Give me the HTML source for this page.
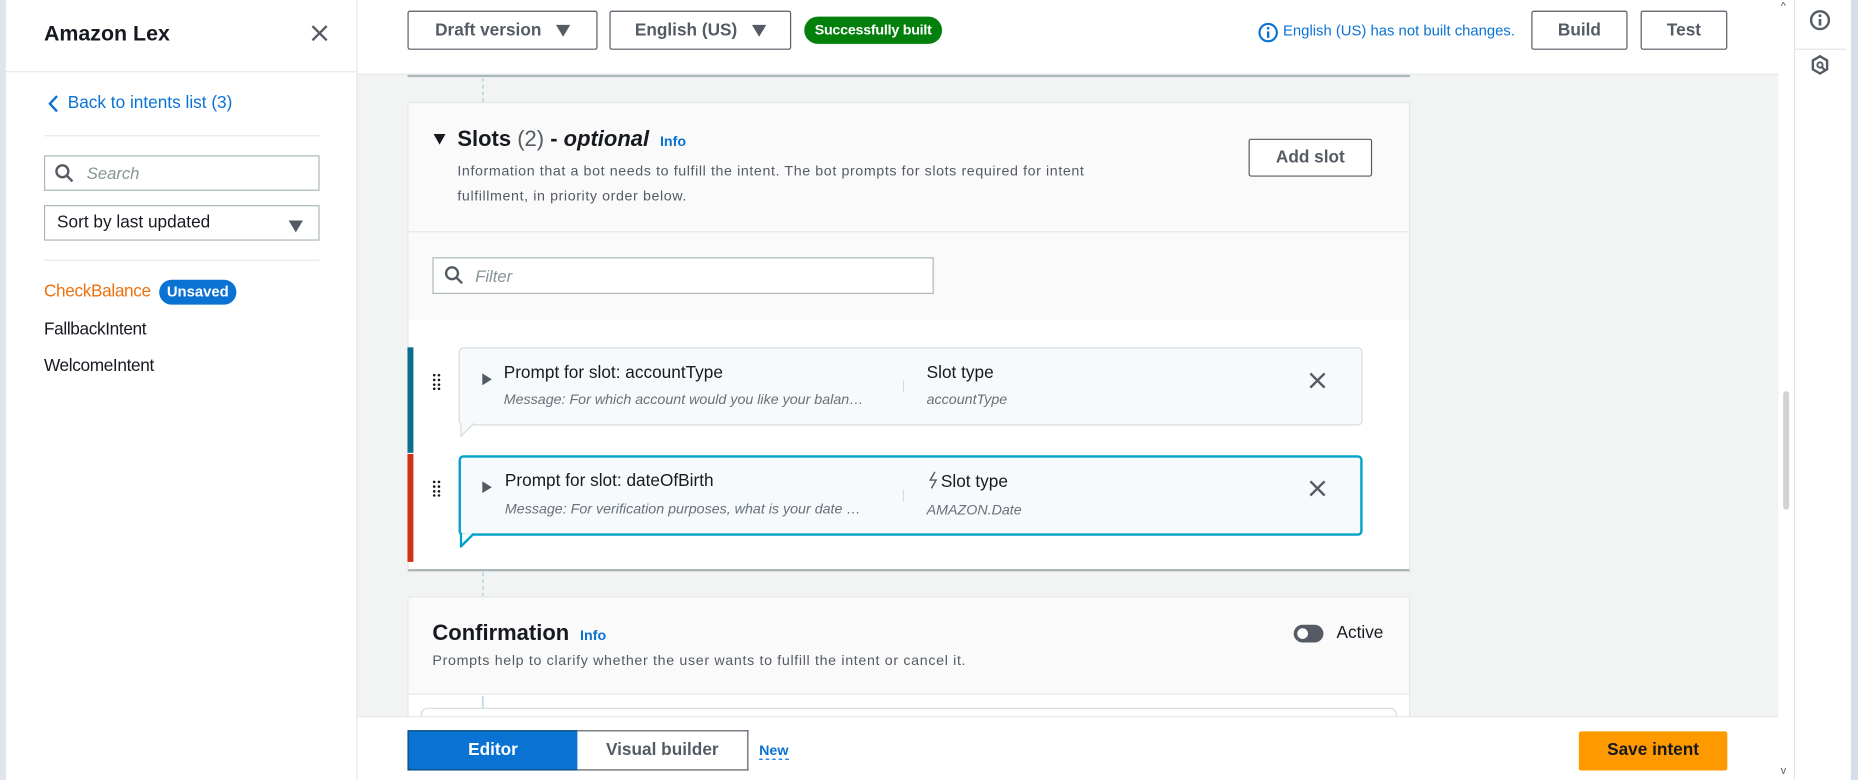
<!DOCTYPE html>
<html><head><meta charset="utf-8"><style>
*{box-sizing:border-box;margin:0;padding:0}
html,body{width:1858px;height:780px;overflow:hidden;background:#fff;font-family:"Liberation Sans",sans-serif;color:#16191f}
#w{position:absolute;left:0;top:0;width:1564px;height:658px;transform:scale(1.18798,1.18541);transform-origin:0 0;overflow:hidden}
.a{position:absolute}
.btn{position:absolute;border:1px solid #545b64;background:#fff;font-weight:bold;font-size:14.5px;color:#545b64;display:flex;align-items:center;justify-content:center;border-radius:2px}
.tri{display:inline-block;width:0;height:0;border-left:6px solid transparent;border-right:6px solid transparent;border-top:10px solid #545b64;margin-left:12px}
.hr{position:absolute;height:1px;background:#e5e7ea}
.card{position:absolute;left:386px;width:761px;background:#f7fafd;border:1px solid #d5dbdb;border-radius:4px}
.t{position:absolute;font-size:14.5px;white-space:nowrap}
.m{position:absolute;font-size:12px;font-style:italic;color:#687078;white-space:nowrap}
</style></head><body><div id="w">
<div class="a" style="left:0;top:0;width:5px;height:658px;background:#dfe5ec"></div>
<div class="a" style="left:300px;top:0;width:1px;height:658px;background:#e1e4e8"></div>
<div class="t" style="left:37px;top:18px;font-size:18px;font-weight:bold">Amazon Lex</div>
<svg class="a" style="left:262px;top:21px" width="14" height="14"><path d="M1 1L13 13M13 1L1 13" stroke="#545b64" stroke-width="2"/></svg>
<div class="hr" style="left:5px;top:60px;width:295px"></div>
<svg class="a" style="left:40px;top:80px" width="10" height="15"><path d="M8 1L2 7.5L8 14" stroke="#0972d3" stroke-width="2" fill="none"/></svg>
<div class="t" style="left:57px;top:79px;color:#0972d3">Back to intents list (3)</div>
<div class="hr" style="left:37px;top:114px;width:232px"></div>
<div class="a" style="left:37px;top:131px;width:232px;height:30px;border:1px solid #aab7b8"></div>
<svg class="a" style="left:46px;top:138px" width="16" height="16"><circle cx="6.5" cy="6.5" r="5" stroke="#545b64" stroke-width="2" fill="none"/><path d="M10 10L15 15" stroke="#545b64" stroke-width="2"/></svg>
<div class="t" style="left:73px;top:138px;color:#879596;font-style:italic;font-size:14px">Search</div>
<div class="a" style="left:37px;top:173px;width:232px;height:30px;border:1px solid #aab7b8"></div>
<div class="t" style="left:48px;top:180px">Sort by last updated</div>
<div class="a" style="left:243px;top:183px"><span class="tri" style="margin:0"></span></div>
<div class="hr" style="left:37px;top:219px;width:232px"></div>
<div class="t" style="left:37px;top:238px;color:#ec7211;letter-spacing:-0.3px">CheckBalance</div>
<div class="a" style="left:134px;top:236px;width:65px;height:21px;border-radius:11px;background:#0972d3;color:#fff;font-size:12.5px;font-weight:bold;text-align:center;line-height:21px">Unsaved</div>
<div class="t" style="left:37px;top:270px;letter-spacing:-0.3px">FallbackIntent</div>
<div class="t" style="left:37px;top:301px;letter-spacing:-0.3px">WelcomeIntent</div>

<div class="a" style="left:301px;top:63px;width:1196px;height:541px;background:#f2f3f3"></div>
<div class="a" style="left:343px;top:62px;width:844px;height:3px;background:#fff;border-bottom:2px solid #aab7b8"></div>
<div class="a" style="left:406px;top:66px;height:20px;border-left:1px dashed #9ccfd8"></div>
<div class="a" style="left:343px;top:86px;width:844px;height:396px;background:#fff;border:1px solid #e4e7ea;border-bottom:2px solid #aab7b8"></div>
<div class="a" style="left:344px;top:87px;width:842px;height:183px;background:#fafafa"></div>
<div class="hr" style="left:344px;top:195px;width:842px;background:#e5e7ea"></div>
<div class="a" style="left:365px;top:113px;width:0;height:0;border-left:5px solid transparent;border-right:5px solid transparent;border-top:9px solid #16191f"></div>
<div class="t" style="left:385px;top:106px;font-size:18.5px;font-weight:bold">Slots <span style="font-weight:normal;color:#545b64">(2)</span> - <i>optional</i> <span style="font-size:12px;color:#0972d3;margin-left:4px">Info</span></div>
<div class="t" style="left:385px;top:134px;font-size:12px;letter-spacing:0.5px;color:#545b64;line-height:21px;white-space:normal;width:548px">Information that a bot needs to fulfill the intent. The bot prompts for slots required for intent fulfillment, in priority order below.</div>
<div class="btn" style="left:1051px;top:117px;width:104px;height:32px">Add slot</div>
<div class="a" style="left:364px;top:217px;width:422px;height:31px;border:1px solid #aab7b8;background:#fff"></div>
<svg class="a" style="left:374px;top:224px" width="16" height="16"><circle cx="6.5" cy="6.5" r="5" stroke="#545b64" stroke-width="2" fill="none"/><path d="M10 10L15 15" stroke="#545b64" stroke-width="2"/></svg>
<div class="t" style="left:400px;top:225px;color:#879596;font-style:italic;font-size:14px">Filter</div>

<div class="a" style="left:343px;top:293px;width:5px;height:89px;background:#0b6e8a"></div>
<div class="a" style="left:343px;top:383px;width:5px;height:91px;background:#d13212"></div>
<div class="card" style="top:293px;height:66px"></div>
<svg class="a" style="left:387px;top:357px" width="14" height="12"><path d="M1 0V11L12 0" fill="#f7fafd" stroke="#d5dbdb"/></svg>
<div class="card" style="top:384px;height:68px;border:2px solid #00a1c9"></div>
<svg class="a" style="left:387px;top:450px" width="14" height="12"><path d="M1 0V11L12 0" fill="#f7fafd" stroke="#00a1c9" stroke-width="2"/></svg>
<svg class="a" style="left:364px;top:315px" width="8" height="14"><g fill="#16191f"><circle cx="1.5" cy="1.5" r="1.1"/><circle cx="5.5" cy="1.5" r="1.1"/><circle cx="1.5" cy="5.5" r="1.1"/><circle cx="5.5" cy="5.5" r="1.1"/><circle cx="1.5" cy="9.5" r="1.1"/><circle cx="5.5" cy="9.5" r="1.1"/><circle cx="1.5" cy="13" r="1.1"/><circle cx="5.5" cy="13" r="1.1"/></g></svg>
<svg class="a" style="left:364px;top:405px" width="8" height="14"><g fill="#16191f"><circle cx="1.5" cy="1.5" r="1.1"/><circle cx="5.5" cy="1.5" r="1.1"/><circle cx="1.5" cy="5.5" r="1.1"/><circle cx="5.5" cy="5.5" r="1.1"/><circle cx="1.5" cy="9.5" r="1.1"/><circle cx="5.5" cy="9.5" r="1.1"/><circle cx="1.5" cy="13" r="1.1"/><circle cx="5.5" cy="13" r="1.1"/></g></svg>
<div class="a" style="left:406px;top:315px;border-top:5px solid transparent;border-bottom:5px solid transparent;border-left:8px solid #545b64"></div>
<div class="a" style="left:406px;top:406px;border-top:5px solid transparent;border-bottom:5px solid transparent;border-left:8px solid #545b64"></div>
<div class="t" style="left:424px;top:307px">Prompt for slot: accountType</div>
<div class="m" style="left:424px;top:330px">Message: For which account would you like your balan…</div>
<div class="a" style="left:760px;top:321px;width:1px;height:10px;background:#d5dbdb"></div>
<div class="t" style="left:780px;top:307px">Slot type</div>
<div class="m" style="left:780px;top:330px">accountType</div>
<svg class="a" style="left:1102px;top:314px" width="14" height="14"><path d="M1 1L13 13M13 1L1 13" stroke="#545b64" stroke-width="2"/></svg>
<div class="t" style="left:425px;top:398px">Prompt for slot: dateOfBirth</div>
<div class="m" style="left:425px;top:422px">Message: For verification purposes, what is your date …</div>
<div class="a" style="left:760px;top:413px;width:1px;height:10px;background:#d5dbdb"></div>
<svg class="a" style="left:781px;top:397px" width="9" height="16"><path d="M6 1L2 8H7L3 15" stroke="#545b64" stroke-width="1.2" fill="none"/></svg>
<div class="t" style="left:792px;top:399px">Slot type</div>
<div class="m" style="left:780px;top:423px">AMAZON.Date</div>
<svg class="a" style="left:1102px;top:405px" width="14" height="14"><path d="M1 1L13 13M13 1L1 13" stroke="#545b64" stroke-width="2"/></svg>

<div class="a" style="left:406px;top:483px;height:20px;border-left:1px dashed #9ccfd8"></div>
<div class="a" style="left:343px;top:503px;width:844px;height:110px;background:#fff;border:1px solid #e4e7ea"></div>
<div class="a" style="left:344px;top:504px;width:842px;height:82px;background:#fafafa;border-bottom:1px solid #e5e7ea"></div>
<div class="t" style="left:364px;top:523px;font-size:18.5px;font-weight:bold">Confirmation <span style="font-size:12px;color:#0972d3;margin-left:4px">Info</span></div>
<div class="t" style="left:364px;top:550px;font-size:12px;color:#545b64;letter-spacing:0.55px">Prompts help to clarify whether the user wants to fulfill the intent or cancel it.</div>
<div class="a" style="left:1089px;top:527px;width:25px;height:15px;border-radius:8px;background:#545b64"></div>
<div class="a" style="left:1092px;top:530px;width:9px;height:9px;border-radius:5px;background:#fff"></div>
<div class="t" style="left:1125px;top:526px">Active</div>
<div class="a" style="left:406px;top:587px;height:11px;border-left:1px solid #9ccfd8"></div>
<div class="a" style="left:354px;top:597px;width:822px;height:20px;border:1px solid #d5dbdb;border-radius:6px;background:#fff"></div>

<div class="a" style="left:301px;top:0;width:1196px;height:63px;background:#fff;border-bottom:1px solid #e5e7ea"></div>
<div class="btn" style="left:343px;top:9px;width:160px;height:33px">Draft version<span class="tri"></span></div>
<div class="btn" style="left:513px;top:9px;width:153px;height:33px">English (US)<span class="tri"></span></div>
<div class="a" style="left:677px;top:14px;width:116px;height:23px;border-radius:12px;background:#037f0c;color:#fff;font-size:12px;font-weight:bold;text-align:center;line-height:23px;letter-spacing:-0.2px">Successfully built</div>
<svg class="a" style="left:1059px;top:19px" width="17" height="17"><circle cx="8.5" cy="8.5" r="7.3" stroke="#0972d3" stroke-width="1.8" fill="none"/><path d="M8.5 7.5V13" stroke="#0972d3" stroke-width="2"/><circle cx="8.5" cy="4.8" r="1.1" fill="#0972d3"/></svg>
<div class="t" style="left:1080px;top:19px;font-size:12.5px;color:#0972d3">English (US) has not built changes.</div>
<div class="btn" style="left:1289px;top:9px;width:81px;height:33px">Build</div>
<div class="btn" style="left:1381px;top:9px;width:73px;height:33px">Test</div>

<div class="a" style="left:301px;top:604px;width:1196px;height:54px;background:#fff;border-top:1px solid #e5e7ea"></div>
<div class="a" style="left:343px;top:616px;width:144px;height:34px;background:#0972d3;border:1px solid #0a4a74;color:#fff;font-weight:bold;font-size:14.5px;text-align:center;line-height:32px">Editor</div>
<div class="a" style="left:486px;top:616px;width:144px;height:34px;background:#fff;border:1px solid #545b64;border-left:none;color:#545b64;font-weight:bold;font-size:14.5px;text-align:center;line-height:32px">Visual builder</div>
<div class="t" style="left:639px;top:626px;font-size:12px;font-weight:bold;color:#0972d3;border-bottom:1px dashed #0972d3">New</div>
<div class="a" style="left:1329px;top:617px;width:125px;height:33px;background:#ff9900;color:#16191f;font-weight:bold;font-size:14.5px;text-align:center;line-height:33px;border-radius:2px">Save intent</div>

<div class="a" style="left:1497px;top:0;width:13px;height:658px;background:#fff"></div>
<div class="a" style="left:1501px;top:330px;width:5px;height:100px;background:#d0d3d6;border-radius:3px"></div>
<div class="t" style="left:1499px;top:0;font-size:9px;color:#545b64">^</div>
<div class="t" style="left:1499px;top:645px;font-size:9px;color:#545b64">v</div>
<div class="a" style="left:1510px;top:0;width:1px;height:658px;background:#e1e4e8"></div>
<div class="a" style="left:1511px;top:41px;width:43px;height:1px;background:#e1e4e8"></div>
<div class="a" style="left:1558px;top:0;width:6px;height:658px;background:#d5dfe9"></div>
<svg class="a" style="left:1523px;top:8px" width="18" height="18"><circle cx="9" cy="9" r="7.5" stroke="#545b64" stroke-width="2" fill="none"/><path d="M9 8V13.5" stroke="#545b64" stroke-width="2.2"/><circle cx="9" cy="5.2" r="1.2" fill="#545b64"/></svg>
<svg class="a" style="left:1524px;top:46px" width="16" height="18"><path d="M8 1.5L14 5V12.5L8 16L2 12.5V5Z" stroke="#545b64" stroke-width="2" fill="none"/><circle cx="8" cy="8.8" r="2.2" stroke="#545b64" stroke-width="1.6" fill="none"/><path d="M9.5 10.5L12 13" stroke="#545b64" stroke-width="1.8"/></svg>
</div></body></html>
